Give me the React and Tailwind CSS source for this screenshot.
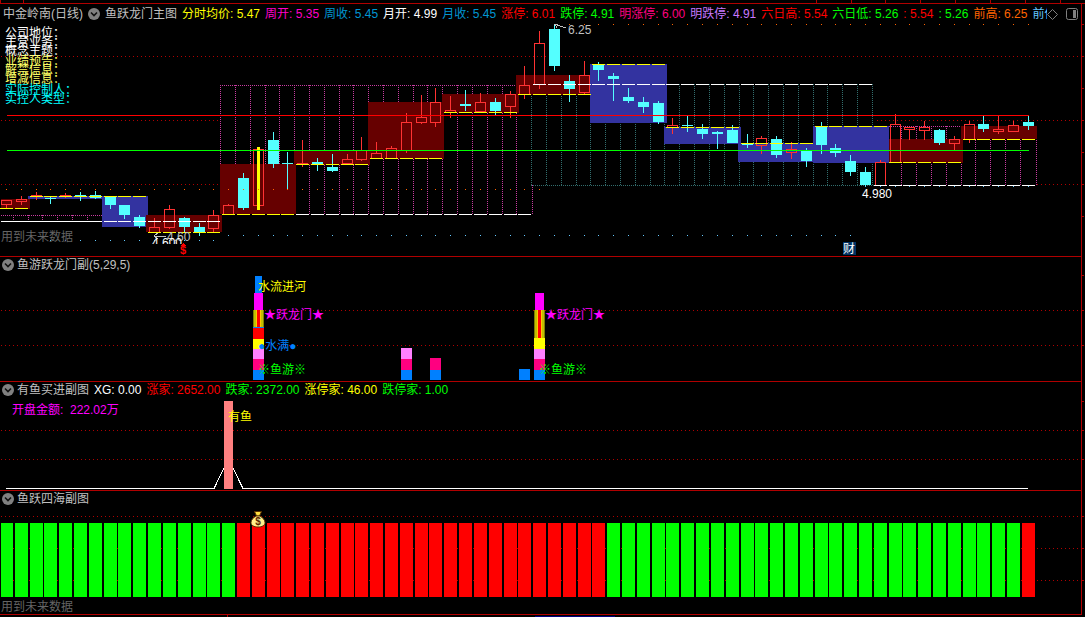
import React from "react";

// candle centre on the x axis, all panels share it
const cx = (i) => Math.round(6 + 14.81 * i);

// [up = 1 / down = 0, high, bodyTop, bodyBottom, low]
const candles = [
  [1, 200, 200, 204, 208], [1, 196, 199, 201, 204], [1, 192, 195, 195, 199], [0, 196, 198, 198, 203],
  [1, 193, 195, 195, 197], [0, 192, 195, 196, 200], [0, 191, 195, 197, 198], [0, 196, 197, 204, 208],
  [0, 205, 205, 214, 218], [0, 215, 217, 225, 227], [1, 218, 227, 232, 232], [1, 205, 209, 227, 228],
  [0, 217, 218, 226, 231], [0, 223, 227, 231, 235], [1, 210, 215, 228, 231], [1, 204, 205, 214, 214],
  [0, 173, 178, 207, 209], [1, 149, 149, 205, 205], [0, 132, 140, 163, 167], [0, 152, 163, 163, 188],
  [1, 140, 163, 163, 166], [0, 158, 162, 163, 170], [0, 154, 167, 170, 171], [1, 154, 159, 163, 163],
  [1, 137, 150, 159, 160], [1, 142, 153, 158, 158], [1, 146, 148, 158, 158], [1, 113, 122, 150, 152],
  [1, 95, 117, 122, 123], [1, 88, 102, 122, 126], [1, 96, 110, 112, 117], [0, 90, 104, 105, 110],
  [1, 93, 102, 111, 111], [0, 98, 102, 110, 114], [1, 91, 94, 106, 117], [1, 66, 85, 94, 98],
  [1, 31, 43, 84, 88], [0, 23, 29, 65, 70], [0, 75, 81, 88, 101], [1, 61, 75, 92, 94],
  [0, 62, 65, 69, 80], [0, 73, 76, 78, 100], [0, 88, 97, 100, 102], [0, 97, 102, 106, 112],
  [0, 101, 103, 121, 123], [1, 118, 125, 127, 133], [0, 116, 125, 125, 131], [0, 124, 129, 133, 138],
  [0, 131, 132, 133, 148], [0, 125, 130, 142, 142], [0, 134, 143, 144, 147], [1, 136, 138, 145, 153],
  [0, 136, 139, 154, 157], [1, 142, 149, 152, 158], [0, 148, 150, 160, 166], [0, 122, 127, 144, 153],
  [0, 144, 148, 152, 156], [0, 155, 161, 171, 175], [0, 167, 172, 184, 186], [1, 160, 162, 185, 185],
  [1, 114, 124, 162, 162], [1, 127, 127, 129, 139], [1, 121, 127, 130, 139], [0, 129, 130, 142, 144],
  [1, 136, 139, 143, 149], [1, 121, 124, 139, 142], [0, 116, 124, 128, 131], [1, 116, 129, 131, 133],
  [1, 121, 125, 131, 131], [0, 116, 122, 125, 129],
];

// week blocks: [x1, y1, x2, y2, colour]
const MAROON = "#660000";
const BLUE = "#3333a0";
const blocks = [
  [1, 199, 30, 209, MAROON],
  [28, 196, 102, 199, BLUE],
  [102, 196, 148, 227, BLUE],
  [146, 215, 222, 232, MAROON],
  [220, 164, 296, 214, MAROON],
  [294, 151, 370, 165, MAROON],
  [368, 102, 444, 159, MAROON],
  [442, 94, 519, 113, MAROON],
  [516, 75, 592, 95, MAROON],
  [590, 64, 667, 123, BLUE],
  [664, 127, 741, 144, BLUE],
  [738, 143, 815, 162, BLUE],
  [813, 126, 889, 163, BLUE],
  [889, 139, 963, 163, MAROON],
  [961, 126, 1037, 139, MAROON],
];

// stepped lines: [from, to, y, colour]
const YELLOW = "#ffff00";
const steps = [
  [0, 1, 208, YELLOW], [2, 9, 196, YELLOW], [10, 14, 232, YELLOW], [15, 19, 214, YELLOW],
  [20, 24, 164, YELLOW], [25, 29, 158, YELLOW], [30, 34, 112, YELLOW], [35, 39, 94, YELLOW],
  [40, 44, 64, YELLOW], [45, 49, 127, YELLOW], [50, 54, 143, YELLOW], [55, 59, 126, YELLOW],
  [60, 64, 162, YELLOW], [65, 69, 139, YELLOW],
  [7, 14, 221, "#ffffff"], [20, 35, 214, "#ffffff"], [36, 58, 84, "#ffffff"], [59, 69, 185, "#ffffff"],
];

const notes = [
  ["公司地位：", 32, "#ffffff"],
  ["主营业务：", 41, "#ffffff"],
  ["概念主题：", 50, "#ffffff"],
  ["业绩预告：", 60, "#ffff66"],
  ["解禁信息：", 69, "#ffff66"],
  ["增减信息：", 78, "#ffff66"],
  ["实际控制人：", 89, "#00ffff"],
  ["实控人类型：", 98, "#00ffff"],
];

const range = (from, to) => Array.from({ length: to - from + 1 }, (_, k) => from + k);

function Grid({ y }) {
  return <line x1="0" x2="100%" y1={y + 0.5} y2={y + 0.5} stroke="#b00000" strokeDasharray="1 3" strokeDashoffset="3" />;
}

function Label({ x, y, fill, children }) {
  return <text x={x} y={y + 5} fill={fill} fontSize="12" xmlSpace="preserve">{children}</text>;
}

function DottedV({ x, y1, y2, color }) {
  return <line x1={x + 0.5} x2={x + 0.5} y1={y1} y2={y2} stroke={color} strokeDasharray="1 1" />;
}

function DottedH({ x1, x2, y, color }) {
  return <line x1={x1} x2={x2} y1={y + 0.5} y2={y + 0.5} stroke={color} strokeDasharray="1 1" />;
}

function Candle({ i, data }) {
  const [up, high, top, bottom, low] = data;
  const x = cx(i);
  const h = bottom - top + 1;
  if (!up) {
    return (
      <g fill="#54ffff">
        <rect x={x} y={high} width="1" height={low - high + 1} />
        <rect x={x - 5} y={top} width="11" height={h} />
      </g>
    );
  }
  return (
    <g fill="#ff3232">
      <rect x={x} y={high} width="1" height={Math.max(top - high, 0)} />
      <rect x={x} y={bottom} width="1" height={low - bottom + 1} />
      {h < 2 ? (
        <rect x={x - 5} y={top} width="11" height="1" />
      ) : (
        <rect x={x - 4.5} y={top + 0.5} width="10" height={h - 1} fill="none" stroke="#ff3232" />
      )}
    </g>
  );
}

// chart canvas; everything inside uses window y values, so shift by the panel top
function Plot({ top, className, title, children }) {
  return (
    <svg className={className} role="img" aria-label={title} shapeRendering="crispEdges">
      <g transform={`translate(0 ${-top})`}>{children}</g>
    </svg>
  );
}

function Toggle({ name }) {
  return (
    <button type="button" aria-label={name} className="h-3 w-3 shrink-0">
      <svg viewBox="0 0 12 12" className="block h-3 w-3">
        <circle cx="6" cy="6" r="6" fill="#808080" />
        <path d="M3 4.5 L6 7.5 L9 4.5" fill="none" stroke="#101010" strokeWidth="1.6" />
      </svg>
    </button>
  );
}

function Values({ items }) {
  return items.map(([text, color], i) => (
    <span key={i} className={color}>{text}</span>
  ));
}

const mainValues = [
  ["分时均价: 5.47", "text-[#ffff00]"],
  ["周开: 5.35", "text-[#ff00c8]"],
  ["周收: 5.45", "text-[#0096d2]"],
  ["月开: 4.99", "text-white"],
  ["月收: 5.45", "text-[#0096d2]"],
  ["涨停: 6.01", "text-[#ff0000]"],
  ["跌停: 4.91", "text-[#00ff00]"],
  ["明涨停: 6.00", "text-[#ff0080]"],
  ["明跌停: 4.91", "text-[#c878ff]"],
  ["六日高: 5.54", "text-[#ff0000]"],
  ["六日低: 5.26", "text-[#00ff00]"],
  [": 5.54", "text-[#ff0000]"],
  [": 5.26", "text-[#00ff00]"],
  ["前高: 6.25", "text-[#ff6400]"],
  ["前低: 4.60", "text-[#64c8ff]"],
];

const buyValues = [
  ["XG: 0.00", "text-white"],
  ["涨家: 2652.00", "text-[#ff0000]"],
  ["跌家: 2372.00", "text-[#00ff00]"],
  ["涨停家: 46.00", "text-[#ffff00]"],
  ["跌停家: 1.00", "text-[#00ff00]"],
];

function MainHeader() {
  return (
    <header className="flex h-5 items-center leading-5">
      <div className="flex min-w-0 flex-1 items-center gap-[5px] overflow-hidden pl-[3px]">
        <span>中金岭南(日线)</span>
        <Toggle name="主图指标" />
        <h1>鱼跃龙门主图</h1>
        <Values items={mainValues} />
      </div>
      <div className="flex shrink-0 items-center gap-2 pr-[3px]">
        <button type="button" aria-label="标记">
          <svg viewBox="0 0 11 11" className="block h-[11px] w-[11px]">
            <path d="M5.5 0.5 L10.5 5.5 L5.5 10.5 L0.5 5.5 Z" fill="none" stroke="#808080" />
          </svg>
        </button>
        <button type="button" aria-label="侧栏">
          <svg viewBox="0 0 12 12" className="block h-3 w-3">
            <rect x="0.5" y="0.5" width="11" height="11" rx="2" fill="none" stroke="#808080" />
            <rect x="7" y="2" width="3" height="8" fill="#808080" />
          </svg>
        </button>
      </div>
    </header>
  );
}

function PanelHeader({ title, values = [] }) {
  return (
    <header className="flex h-4 items-center gap-[5px] overflow-hidden pl-0.5 leading-4">
      <div className="flex shrink-0 items-center gap-[3px]">
        <Toggle name={title} />
        <h2>{title}</h2>
      </div>
      <Values items={values} />
    </header>
  );
}

function MainChart() {
  return (
    <Plot top={24} className="block h-[232px] w-full" title="K线主图">
      <Grid y={56} />
      <Grid y={120} />
      <Grid y={184} />

      {/* month boxes cover the grid */}
      <rect x="220" y="85" width="655" height="101" fill="#000000" />
      <rect x="875" y="126" width="162" height="60" fill="#000000" />
      <DottedH x1={1} x2={102} y={215} color="#c83ca0" />
      {range(1, 6).map((i) => <DottedV key={i} x={cx(i) - 8} y1={215} y2={221} color="#c83ca0" />)}
      <DottedH x1={220} x2={516} y={85} color="#c83ca0" />
      {range(15, 35).map((i) => <DottedV key={i} x={cx(i) - 8} y1={85} y2={214} color="#c83ca0" />)}
      <DottedV x={532} y1={185} y2={215} color="#c83ca0" />
      {range(36, 59).map((i) => <DottedV key={i} x={cx(i) - 8} y1={84} y2={185} color="#326e6e" />)}
      <DottedH x1={531} x2={875} y={185} color="#326e6e" />
      <DottedH x1={889} x2={961} y={126} color="#c83ca0" />
      {range(61, 69).map((i) => <DottedV key={i} x={cx(i) - 8} y1={126} y2={185} color="#c83ca0" />)}
      <DottedV x={1036} y1={126} y2={186} color="#c83ca0" />

      {blocks.map(([x1, y1, x2, y2, color]) => (
        <rect key={x1} x={x1} y={y1} width={x2 - x1} height={y2 - y1} fill={color} />
      ))}
      {candles.map((c, i) => <Candle key={i} i={i} data={c} />)}
      <rect x="257" y="147" width="3" height="63" fill="#ffff00" />

      <rect x="1" y="221" width="101" height="1" fill="#ffffff" />
      {steps.map(([from, to, y, color]) =>
        range(from, to).map((i) => (
          <rect key={`${y}-${i}`} x={cx(i) - 6} y={y} width="13" height="1" fill={color} />
        ))
      )}
      <rect x="7" y="115" width="1022" height="1" fill="#ff0000" />
      <rect x="7" y="150" width="1022" height="1" fill="#00ff00" />

      {/* previous high / low marks */}
      {range(0, 69).map((i) => (
        <rect key={i} x={cx(i)} y={i < 37 ? 189 : 24} width="1" height="1" fill="#ff6400" />
      ))}
      {range(3, 69).map((i) => (
        <rect key={i} x={cx(i)} y={i < 15 ? 240 : i < 58 ? 235 : 186} width="1" height="1" fill="#64c8ff" />
      ))}

      {notes.map(([text, y, color]) => <Label key={text} x={5} y={y} fill={color}>{text}</Label>)}
      <Label x={1} y={236} fill="#646464">用到未来数据</Label>

      <path d="M554.5 24 L566 28 M554 24 h4 M555 24 l2 4" stroke="#c0c0c0" fill="none" />
      <Label x={568} y={29} fill="#c0c0c0">6.25</Label>
      <path d="M154 236.5 h12 M154 236 l4 -3 M154 236 l4 3" stroke="#c0c0c0" fill="none" />
      <Label x={167} y={236} fill="#c0c0c0">4.60</Label>
      <svg x="150" y="236" width="40" height="8">
        <text x="2" y="11" fill="#ffffff" fontSize="12">4.600</text>
      </svg>
      <Label x={862} y={193} fill="#ffffff">4.980</Label>
      <path d="M183 243 l3 3 h-6 z" fill="#ff0000" />
      <text x="180" y="254" fill="#ff0000" fontSize="11" fontWeight="bold">$</text>
      <rect x="843" y="242" width="13" height="13" fill="#003264" />
      <Label x={843} y={248} fill="#ffffff">财</Label>
    </Plot>
  );
}

// [left, width, top, bottom, colour]
const swimBars = [
  [255, 7, 276, 293, "#0080ff"],
  [254, 9, 293, 310, "#ff00ff"],
  [253, 11, 327, 328, "#0080ff"],
  [253, 11, 328, 339, "#ff0000"],
  [253, 11, 339, 349, "#ffff00"],
  [253, 11, 349, 359, "#ff80ff"],
  [253, 11, 359, 370, "#ff0080"],
  [253, 11, 370, 380, "#0080ff"],
  [401, 11, 348, 359, "#ff80ff"],
  [401, 11, 359, 370, "#ff0080"],
  [401, 11, 370, 380, "#0080ff"],
  [430, 11, 358, 370, "#ff0080"],
  [430, 11, 370, 380, "#0080ff"],
  [519, 11, 369, 380, "#0080ff"],
  [535, 9, 293, 310, "#ff00ff"],
  [534, 11, 338, 349, "#ffff00"],
  [534, 11, 349, 359, "#ff80ff"],
  [534, 11, 359, 370, "#ff0080"],
  [534, 11, 370, 380, "#0080ff"],
];

function GoldBar({ x, y, height }) {
  return (
    <g>
      <rect x={x} y={y} width="11" height={height} fill="#808000" />
      <rect x={x + 1} y={y} width="9" height={height} fill="#c0c000" />
      <rect x={x + 3} y={y} width="5" height={height} fill="#ffc800" />
      <rect x={x + 4} y={y} width="3" height={height} fill="#ff0000" />
    </g>
  );
}

function SwimChart() {
  return (
    <Plot top={273} className="block h-[108px] w-full" title="鱼游跃龙门副图">
      <Grid y={310} />
      <Grid y={345} />
      {swimBars.map(([x, w, y1, y2, color]) => (
        <rect key={`${x}-${y1}`} x={x} y={y1} width={w} height={y2 - y1} fill={color} />
      ))}
      <GoldBar x={253} y={310} height={17} />
      <GoldBar x={534} y={310} height={28} />
      <Label x={258} y={286} fill="#ffff00">水流进河</Label>
      <Label x={264} y={314} fill="#ff00ff">★跃龙门★</Label>
      <Label x={258} y={345} fill="#0080ff">●水满●</Label>
      <Label x={258} y={369} fill="#00ff00">※鱼游※</Label>
      <Label x={545} y={314} fill="#ff00ff">★跃龙门★</Label>
      <Label x={539} y={369} fill="#00ff00">※鱼游※</Label>
    </Plot>
  );
}

function BuyChart() {
  return (
    <Plot top={398} className="block h-[92px] w-full" title="有鱼买进副图">
      <Grid y={430} />
      <Grid y={459} />
      <path d="M6 488.5 H214 L228.5 459 L243 488.5 H1028" fill="none" stroke="#ffffff" />
      <rect x="224" y="401" width="9" height="88" fill="#ff8080" />
      <Label x={12} y={409} fill="#ff00ff">{"开盘金额:  222.02万"}</Label>
      <Label x={228} y={416} fill="#ffff00">有鱼</Label>
    </Plot>
  );
}

function SeaChart() {
  return (
    <Plot top={507} className="block h-[107px] w-full" title="鱼跃四海副图">
      <Grid y={516} />
      <Grid y={548} />
      <Grid y={580} />
      {range(0, 69).map((i) => (
        <rect
          key={i}
          x={Math.max(cx(i) - 6, 1)}
          y="523"
          width={i === 0 ? 12 : 13}
          height="74"
          fill={(i > 15 && i < 41) || i === 69 ? "#ff0000" : "#00ff00"}
        />
      ))}
      {/* money bag */}
      <g shapeRendering="auto">
        <path d="M254.500 511.500 h7 l-2 4.500 h-3 z" fill="#ffe040" stroke="#5a3200" />
        <path d="M256 516 h4 c3 2 5 4 5 6.500 c0 3 -3 4.500 -7 4.500 s-7 -1.500 -7 -4.500 c0 -2.500 2 -4.500 5 -6.500 z" fill="#fff08c" stroke="#5a3200" />
        <text x="258" y="525" fill="#5a2800" fontSize="10" fontWeight="bold" textAnchor="middle">$</text>
      </g>
      <Label x={1} y={606} fill="#646464">用到未来数据</Label>
    </Plot>
  );
}

const topTicks = [0, 23, 816, 851, 885, 920, 955, 990, 1025, 1060];
const sideTicks = [24, 56, 88, 120, 152, 184, 216, 275, 310, 345, 401, 430, 459, 516, 548, 580];

export default function App() {
  return (
    <main className="flex w-full flex-col overflow-hidden whitespace-nowrap bg-black font-['Liberation_Sans','Noto_Sans_CJK_SC',sans-serif] text-[12px] text-[#c0c0c0]">
      <svg className="block h-[3px] w-full" shapeRendering="crispEdges" aria-hidden="true">
        {topTicks.map((x) => <rect key={x} x={x} y="0" width="1" height="3" fill="#b00000" />)}
      </svg>
      <div className="flex border-t border-[#b00000]">
        <div className="min-w-0 flex-1 border-r border-[#b00000]">
          <section className="border-b border-[#b00000]">
            <MainHeader />
            <MainChart />
          </section>
          <section className="border-b border-[#b00000]">
            <PanelHeader title="鱼游跃龙门副(5,29,5)" />
            <SwimChart />
          </section>
          <section className="border-b border-[#b00000]">
            <PanelHeader title="有鱼买进副图" values={buyValues} />
            <BuyChart />
          </section>
          <section className="border-b border-[#b00000]">
            <PanelHeader title="鱼跃四海副图" />
            <SeaChart />
          </section>
        </div>
        <svg className="block w-[3px] shrink-0" shapeRendering="crispEdges" aria-hidden="true">
          <g transform="translate(0 -4)">
            {sideTicks.map((y) => <rect key={y} x="0" y={y} width="2" height="1" fill="#b00000" />)}
          </g>
        </svg>
      </div>
      <svg className="block h-0.5 w-full" shapeRendering="crispEdges" aria-hidden="true">
        <rect x="227" y="0" width="1" height="2" fill="#b00000" />
        <rect x="535" y="1" width="80" height="1" fill="#000080" />
      </svg>
    </main>
  );
}
